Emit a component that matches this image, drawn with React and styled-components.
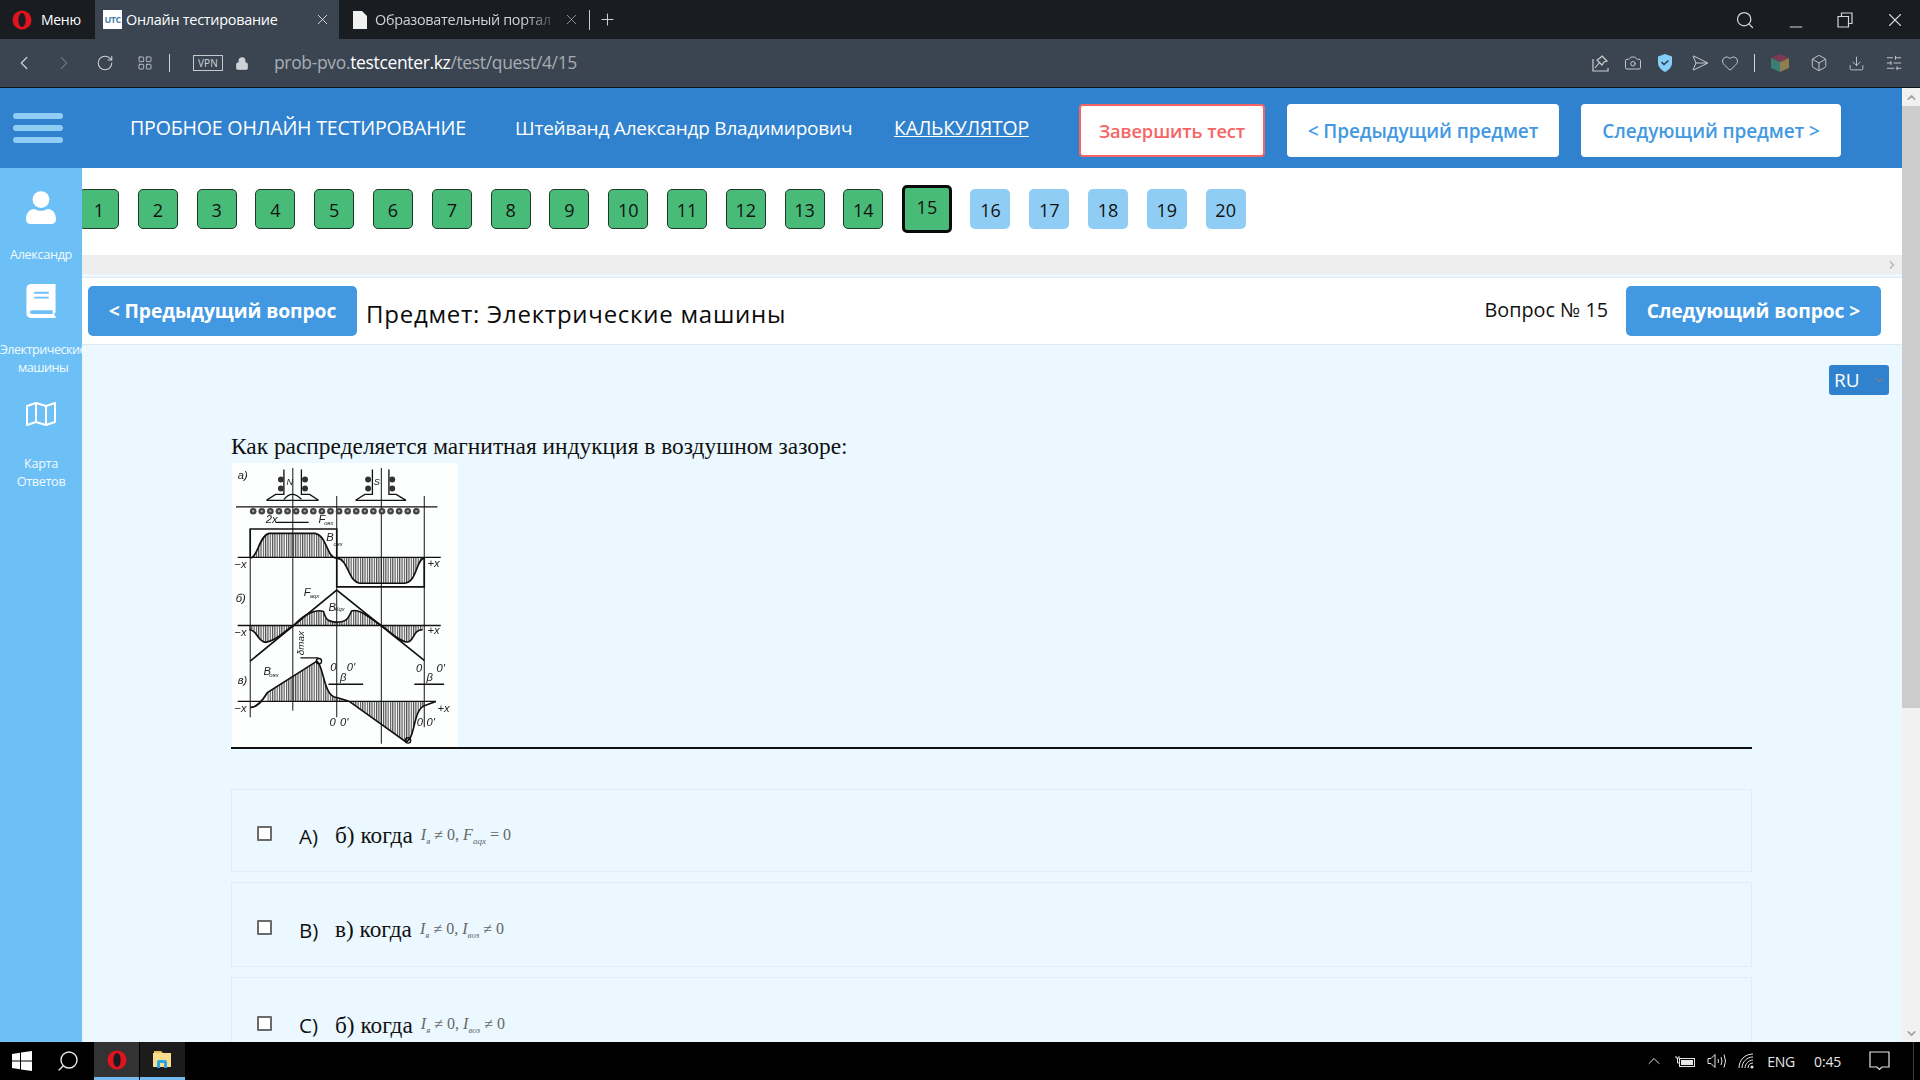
import React from 'react';
import styled, { createGlobalStyle } from 'styled-components';
import {
  X, Plus, Search, Minus, ChevronLeft, ChevronRight, RotateCw, LayoutGrid, Lock,
  Camera, Send, Heart, Box, Download, SlidersHorizontal, ChevronUp, ChevronDown,
} from 'lucide-react';

const ui = '"Open Sans", "Noto Sans", sans-serif';
const serif = '"Liberation Serif", serif';

const GlobalStyle = createGlobalStyle`
  html, body { margin: 0; padding: 0; height: 100%; overflow: hidden; }
  body { font-family: ${ui}; background: #000; }
  * { box-sizing: border-box; }
`;

const Screen = styled.div`
  width: 1920px;
  height: 1080px;
  display: flex;
  flex-direction: column;
  overflow: hidden;
`;

/* browser chrome */
const TabStrip = styled.div`
  height: 39px;
  flex: none;
  display: flex;
  align-items: center;
  background: #191c21;
  color: #fff;
`;
const MenuButton = styled.div`
  width: 95px;
  height: 100%;
  display: flex;
  align-items: center;
  gap: 9px;
  padding-left: 12px;
  font-size: 14px;
  letter-spacing: -.3px;
`;
const ActiveTab = styled.div`
  width: 244px;
  height: 100%;
  display: flex;
  align-items: center;
  padding-left: 8px;
  background: #3a4551;
  font-size: 14.4px;
  letter-spacing: -.25px;
`;
const Favicon = styled.div`
  width: 19px;
  height: 19px;
  margin-right: 4px;
  background: #fff;
  color: #4a7fa8;
  font-size: 9px;
  font-weight: 700;
  line-height: 19px;
  text-align: center;
  letter-spacing: -.5px;
`;
const TabTitle = styled.span`
  flex: 1;
  white-space: nowrap;
  color: #fff;
`;
const FadedTitle = styled.span`
  width: 176px;
  flex: none;
  white-space: nowrap;
  color: #cfd3d7;
  -webkit-mask-image: linear-gradient(to right, #000 85%, rgba(0, 0, 0, .25));
  mask-image: linear-gradient(to right, #000 85%, rgba(0, 0, 0, .25));
`;
const TabClose = styled.div`
  width: 34px;
  flex: none;
  display: flex;
  justify-content: center;
  color: ${({ $dim }) => ($dim ? '#9aa0a6' : '#e8e8e8')};
`;
const IdleTab = styled.div`
  width: 250px;
  height: 100%;
  display: flex;
  align-items: center;
  padding-left: 14px;
  font-size: 14.4px;
  letter-spacing: -.3px;
  gap: 8px;
`;
const IdleClose = styled(TabClose)`
  margin-left: -5px;
`;
const NewTab = styled.div`
  height: 20px;
  border-left: 1px solid #c8ccd0;
  padding-left: 8px;
  display: flex;
  align-items: center;
  color: #d8dadc;
`;
const WindowControls = styled.div`
  margin-left: auto;
  display: flex;
  align-items: center;
  gap: 31px;
  padding-right: 14px;
  color: #d3d5d8;
`;
const AddressBar = styled.div`
  height: 49px;
  flex: none;
  display: flex;
  align-items: center;
  background: #3a4551;
  border-bottom: 1px solid #10151a;
  color: #cfd3d7;
  padding-left: 13px;
`;
const NavSlot = styled.div`
  width: ${({ $w }) => $w}px;
  display: flex;
  color: ${({ $off }) => ($off ? '#68727d' : '#cfd3d7')};
`;
const LockSlot = styled(NavSlot)`
  margin-left: 12px;
`;
const ChromeDivider = styled.div`
  width: 1px;
  height: 18px;
  background: #cfd3d7;
`;
const VpnBadge = styled.div`
  margin-left: 23px;
  width: 30px;
  height: 16px;
  border: 1px solid #c5c9cd;
  font-size: 10px;
  line-height: 14px;
  text-align: center;
  letter-spacing: .2px;
`;
const UrlText = styled.div`
  margin: -2px 0 0 25px;
  font-size: 17.5px;
  letter-spacing: -.35px;
  color: #a7adb4;
  b { font-weight: 400; color: #fff; }
`;
const AddressTools = styled.div`
  margin-left: auto;
  display: flex;
  align-items: center;
  gap: 15px;
  padding-right: 17px;
`;
const ToolGap = styled.span`
  display: flex;
  margin-left: 5px;
`;

/* page */
const Viewport = styled.div`
  flex: 1;
  min-height: 0;
  display: flex;
`;
const Page = styled.div`
  flex: 1;
  min-width: 0;
  display: flex;
  flex-direction: column;
  background: #ebf8ff;
`;
const ScrollTrack = styled.div`
  width: 18px;
  flex: none;
  display: flex;
  flex-direction: column;
  background: #f1f1f1;
  color: #a3a3a3;
`;
const ScrollArrow = styled.div`
  height: 18px;
  display: flex;
  align-items: center;
  justify-content: center;
`;
const ScrollThumb = styled.div`
  height: 602px;
  background: #cdcdcd;
  margin-bottom: auto;
`;
const Header = styled.header`
  height: 80px;
  flex: none;
  display: flex;
  align-items: center;
  background: #3182ce;
  color: #fff;
  padding-left: 13px;
`;
const Burger = styled.div`
  width: 50px;
  display: flex;
  flex-direction: column;
  gap: 6px;
  margin: -1px 67px 0 0;
  i {
    height: 6px;
    border-radius: 3px;
    background: #90cdf4;
  }
`;
const HeaderText = styled.div`
  width: ${({ $w }) => $w}px;
  flex: none;
  margin-top: -1px;
  font-size: ${({ $size }) => $size}px;
  letter-spacing: -.2px;
  white-space: nowrap;
  text-decoration: ${({ $link }) => ($link ? 'underline' : 'none')};
`;
const HeaderButton = styled.button`
  width: ${({ $w }) => $w}px;
  height: 53px;
  flex: none;
  margin: 5px 22px 0 0;
  border-radius: 4px;
  background: #fff;
  border: 2px solid ${({ $danger }) => ($danger ? '#f56565' : '#fff')};
  color: ${({ $danger }) => ($danger ? '#f56565' : '#4299e1')};
  font-family: ${ui};
  font-size: ${({ $danger }) => ($danger ? 18.3 : 19)}px;
  font-weight: 600;
  letter-spacing: -.1px;
  white-space: nowrap;
  padding: 0;
`;
const Body = styled.div`
  flex: 1;
  min-height: 0;
  display: flex;
`;
const Sidebar = styled.aside`
  width: 82px;
  flex: none;
  background: #6cc0f6;
  color: #fff;
  position: relative;
  z-index: 1;
  display: flex;
  flex-direction: column;
  align-items: center;
  padding-top: 3px;
`;
const SideItem = styled.div`
  width: 82px;
  height: ${({ $h }) => $h}px;
  flex: none;
  display: flex;
  flex-direction: column;
  align-items: center;
`;
const SideIcon = styled.div`
  height: ${({ $h }) => $h}px;
  flex: none;
  display: flex;
  align-items: center;
  justify-content: center;
`;
const SideLabel = styled.div`
  font-size: 12.7px;
  line-height: 18px;
  letter-spacing: ${({ $tight }) => ($tight ? -0.55 : -0.35)}px;
  margin-left: ${({ $tight }) => ($tight ? 4 : 0)}px;
  text-align: center;
  white-space: nowrap;
  color: #f2faff;
`;
const Main = styled.main`
  flex: 1;
  min-width: 0;
  display: flex;
  flex-direction: column;
  overflow: hidden;
`;
const NumberRow = styled.div`
  height: 87px;
  flex: none;
  background: #fff;
  display: flex;
  align-items: center;
  gap: 18.8px;
  padding-bottom: 5px;
  overflow: hidden;
`;
const NumberButton = styled.div`
  width: ${({ $current }) => ($current ? 49.5 : 40)}px;
  height: ${({ $current }) => ($current ? 48 : 40)}px;
  flex: none;
  border-radius: 5px;
  font-size: 18px;
  display: flex;
  align-items: center;
  justify-content: center;
  color: #111;
  background: ${({ $done }) => ($done ? '#48bb78' : '#90cdf4')};
  border: ${({ $current, $done }) => ($current ? '3px solid #0a0a0a' : $done ? '1px solid #1d3a2a' : 'none')};
  &:first-child { margin-left: -3px; }
  span { position: relative; top: ${({ $current }) => ($current ? -2 : 1)}px; }
`;
const RowScroll = styled.div`
  height: 19px;
  flex: none;
  background: #eeeeee;
  color: #b5b5b5;
  display: flex;
  align-items: center;
  justify-content: flex-end;
  padding-right: 4px;
`;
const QuestionBar = styled.div`
  height: 68px;
  flex: none;
  margin-top: 3px;
  background: #fff;
  border-top: 1px solid #dcebf5;
  border-bottom: 1px solid #e2e8f0;
  display: flex;
  align-items: center;
  padding: 0 21px 0 6px;
`;
const SolidButton = styled.button`
  width: ${({ $w }) => $w}px;
  height: 50px;
  flex: none;
  border: none;
  padding: 0;
  border-radius: 5px;
  background: #4299e1;
  color: #fff;
  font-family: ${ui};
  font-size: 19.3px;
  font-weight: 700;
  letter-spacing: -.1px;
  white-space: nowrap;
  margin-top: -1px;
`;
const SubjectTitle = styled.h2`
  margin: 5px 0 0 9px;
  font-size: 24px;
  font-weight: 500;
  letter-spacing: .75px;
  color: #0b0b0b;
  white-space: nowrap;
`;
const QuestionNumber = styled.div`
  margin: -3px 18px 0 auto;
  font-size: 19.8px;
  color: #111;
`;
const Content = styled.div`
  flex: 1;
  position: relative;
  padding: 88px 150px 0 149px;
`;
const LangSelect = styled.div`
  position: absolute;
  top: 20px;
  right: 13px;
  width: 60px;
  height: 30px;
  border-radius: 3px;
  background: #3182ce;
  color: #fff;
  font-size: 19px;
  display: flex;
  align-items: center;
  padding-left: 5px;
  svg { position: absolute; right: 3px; color: #6b7f95; }
`;
const QuestionText = styled.div`
  font-family: ${serif};
  font-size: 23.4px;
  line-height: 26px;
  color: #111;
  height: 30px;
`;
const Figure = styled.svg`
  display: block;
  width: 228px;
  height: 284px;
  filter: blur(.35px);
`;
const Rule = styled.div`
  height: 2px;
  background: #111;
  margin: 0 0 40px;
`;
const OptionCard = styled.div`
  height: ${({ $h }) => $h}px;
  flex: none;
  margin-bottom: 10px;
  border: 1px solid #e2ecf4;
  display: flex;
  align-items: center;
  padding-left: 25px;
`;
const CheckBox = styled.div`
  width: 15px;
  height: 15px;
  flex: none;
  background: #fff;
  border: 2px solid #6b6b6b;
  border-radius: 1px;
  margin-top: 6px;
`;
const OptionLetter = styled.div`
  width: 36px;
  margin: 10px 0 0 27px;
  font-size: 20.5px;
  color: #111;
`;
const OptionText = styled.div`
  font-family: ${serif};
  font-size: 23.3px;
  color: #111;
  margin: 10px 8px 0 0;
`;
const Formula = styled.div`
  font-family: ${serif};
  font-size: 16px;
  color: #666;
  white-space: nowrap;
  margin-top: 11px;
  sub { font-size: 9px; font-style: italic; }
`;

/* taskbar */
const Taskbar = styled.footer`
  height: 38px;
  flex: none;
  background: #000;
  color: #e6e6e6;
  display: flex;
  align-items: center;
`;
const StartSlot = styled.div`
  width: ${({ $w }) => $w}px;
  height: 100%;
  display: flex;
  align-items: center;
  justify-content: center;
`;
const TaskTile = styled.div`
  width: 45px;
  height: 100%;
  margin-right: 1px;
  display: flex;
  align-items: center;
  justify-content: center;
  background: ${({ $bg }) => $bg};
  border-bottom: 3px solid #76b9ed;
`;
const Tray = styled.div`
  margin-left: auto;
  height: 100%;
  display: flex;
  align-items: center;
  gap: 11px;
  padding-right: 6px;
  font-size: 14px;
  letter-spacing: -.2px;
`;
const TrayText = styled.span`
  margin: 0 ${({ $m }) => $m || 0}px 0 ${({ $l }) => $l || 0}px;
`;
const TrayEdge = styled.div`
  width: 1px;
  height: 100%;
  margin-left: 12px;
  background: #3a3a3a;
`;

const OperaLogo = ({ size = 20 }) => (
  <svg width={size} height={size} viewBox="0 0 20 20">
    <ellipse cx="10" cy="10" rx="9.5" ry="9.5" fill="#e0131f" />
    <ellipse cx="10" cy="10" rx="3.7" ry="7" fill="#191c21" />
  </svg>
);

const PinIcon = () => (
  <svg width="17" height="18" viewBox="0 0 17 18" fill="none" stroke="#c9cdd1" strokeWidth="1.2">
    <path d="M1 5v12h15v-3" />
    <path d="M10 2l5 5-3 1-2 3-5-5 3-2zM7 9l-4 5" />
  </svg>
);
const ShieldIcon = () => (
  <svg width="16" height="18" viewBox="0 0 16 18">
    <path d="M8 0l7 2.5V9c0 4-3 7-7 9-4-2-7-5-7-9V2.500z" fill="#86cdfa" />
    <path d="M4.500 8l2.500 2.500 4.500-4" fill="none" stroke="#2c3947" strokeWidth="1.500" />
  </svg>
);
const ColorCube = () => (
  <svg width="20" height="20" viewBox="0 0 20 20">
    <path d="M10 1l9 4-9 4-9-4z" fill="#7b3a52" />
    <path d="M1 5l9 4v10l-9-4z" fill="#3b7f73" />
    <path d="M19 5l-9 4v10l9-4z" fill="#8f7d50" />
  </svg>
);
const UserIcon = () => (
  <svg width="30" height="34" viewBox="0 0 32 36" fill="#fff">
    <circle cx="16" cy="9" r="9" />
    <path d="M0 30c0-7 4-11 9-11 2 1 4 2 7 2s5-1 7-2c5 0 9 4 9 11 0 3-2 5-4 5H4c-2 0-4-2-4-5z" />
  </svg>
);
const BookIcon = () => (
  <svg width="30" height="34" viewBox="0 0 30 35">
    <path d="M5 0h25v29c-2 1-2 3 0 4v2H6c-4 0-6-2-6-5V5c0-3 2-5 5-5z" fill="#fff" />
    <path d="M8 9h15M8 14h15" stroke="#6cc0f6" strokeWidth="2" />
    <path d="M6 27h21v4H6c-3 0-3-4 0-4z" fill="#6cc0f6" />
  </svg>
);
const MapIcon = () => (
  <svg width="30" height="24" viewBox="0 0 30 24" fill="none" stroke="#fff" strokeWidth="2" strokeLinejoin="round">
    <path d="M1 4l9-3 10 3 9-3v19l-9 3-10-3-9 3z" />
    <path d="M10 1v19M20 4v19" />
  </svg>
);
const WinLogo = () => (
  <svg width="20" height="20" viewBox="0 0 20 20" fill="#fff">
    <path d="M0 3l8-1.200V9.500H0zM9 1.600L20 0v9.500H9zM0 10.500h8v7.700L0 17zM9 10.500h11V20L9 18.400z" />
  </svg>
);
const FolderIcon = () => (
  <svg width="20" height="19" viewBox="0 0 20 19">
    <path d="M1 1h7l2 2h-9z" fill="#e8c15a" />
    <rect x="0" y="3" width="18" height="14" fill="#f8dd8e" />
    <path d="M4 18v-6q0-2 2-2h6q2 0 2 2v6h-3v-5H7v5z" fill="#2fa5e0" />
  </svg>
);
const WifiIcon = () => (
  <svg width="16" height="16" viewBox="0 0 16 16" fill="none" stroke="#e6e6e6" strokeWidth="1">
    <path d="M1 15C1 7 7 1 15 1M4 15c0-6 5-11 11-11M7 15c0-4 4-8 8-8M10 15c0-3 2-5 5-5" />
    <circle cx="14" cy="14" r="1.500" fill="#e6e6e6" stroke="none" />
  </svg>
);
const BatteryIcon = () => (
  <svg width="21" height="13" viewBox="0 0 21 13" fill="none" stroke="#e6e6e6">
    <rect x="4.500" y="3.500" width="15" height="8" />
    <rect x="6" y="5" width="12" height="5" fill="#e6e6e6" stroke="none" />
    <path d="M1 1v2h3V1M2.500 3v5h2" />
  </svg>
);
const VolumeIcon = () => (
  <svg width="20" height="16" viewBox="0 0 20 16" fill="none" stroke="#e6e6e6">
    <path d="M1 5.500h3L8 1.500v13l-4-4H1zM11 6q1 2 0 4M14 4q2 4 0 8M17 1.500q3 6.500 0 13" />
  </svg>
);
const BubbleIcon = () => (
  <svg width="21" height="20" viewBox="0 0 21 20" fill="none" stroke="#e6e6e6" strokeWidth="1.200">
    <path d="M1 1h19v15h-7l-2.500 2.500L8 16H1z" />
  </svg>
);

// machine field sketch, coordinates follow the picture
const FieldDiagram = () => {
  const wires = [];
  for (let x = 97; x <= 600; x += 26) wires.push(x);
  const hatch = [
    'M88 318C110 318 115 250 145 243L285 243C320 250 320 318 350 318Z',
    'M350 318C385 320 385 392 420 394L555 394C595 390 590 320 615 318Z',
    'M85 522V535C110 535 110 572 135 573C170 570 200 530 220 522Z',
    'M220 522C250 490 285 470 310 480C318 510 330 510 350 512C380 512 385 500 395 478C420 470 450 500 485 522Z',
    'M485 522C510 540 540 572 565 572C585 570 580 535 610 535V522Z',
    'M140 752V725L290 630C310 640 310 740 350 740C370 745 380 750 388 752Z',
    'M388 752L560 875C590 860 580 780 615 765V752Z',
  ];
  const subs = [[312, 218, 'оях'], [340, 282, 'оях'], [268, 440, 'aqx'], [345, 478, 'бqx'], [146, 678, 'оях']];
  return (
    <Figure viewBox="33 30 684 860">
      <defs>
        <pattern id="hatch" width="7" height="8" patternUnits="userSpaceOnUse">
          <rect width="3.500" height="8" fill="#222" />
        </pattern>
      </defs>
      <rect x="33" y="30" width="684" height="860" fill="#fdfefe" />
      {hatch.map((d) => <path key={d} d={d} fill="url(#hatch)" opacity=".8" />)}
      <g fill="none" stroke="#111" strokeWidth="4">
        <path d="M217 45V780M350 130V800M485 45V880M88 230V800M615 130V830" strokeWidth="3" />
        <path d="M45 163H655M50 316H665M50 522H665M50 752H650" />
        <path d="M88 318V230H350V405H615V318" strokeWidth="5" />
        <path d="M88 630L350 415L615 628" strokeWidth="5" />
        <path d="M88 318C110 318 115 250 145 243L285 243C320 250 320 318 350 318C385 320 385 392 420 394L555 394C595 390 590 320 615 318" strokeWidth="5" />
        <path d="M85 535C110 535 110 572 135 573C170 570 200 530 220 522C250 490 285 470 310 480C318 510 330 510 350 512C380 512 385 500 395 478C420 470 450 500 485 522C510 540 540 572 565 572C585 570 580 535 610 535" strokeWidth="5" />
        <path d="M88 770C110 770 125 750 140 725L290 630C310 640 310 740 350 740C370 745 380 750 388 752L560 875C590 860 580 780 615 765L650 752" strokeWidth="5" />
        <path d="M137 143L165 125H190V50M295 143L268 125H243V50M137 143H295" />
        <path d="M407 143L435 125H458V50M560 143L530 125H508V50M407 143H560" />
        <path d="M190 140Q215 110 243 140M165 210H265M240 620H295M325 700H430M585 700H675" />
        <circle cx="296" cy="630" r="8" />
        <circle cx="566" cy="870" r="8" />
      </g>
      {[[181, 80], [181, 107], [254, 80], [254, 107], [445, 80], [445, 107], [518, 80], [518, 107]].map(([cx, cy]) => (
        <circle key={`${cx}-${cy}`} cx={cx} cy={cy} r="9" fill="#333" />
      ))}
      {wires.map((cx) => (
        <g key={cx}>
          <circle cx={cx} cy="176" r="10" fill="#444" />
          <circle cx={cx} cy="176" r="3.500" fill="#aaa" />
        </g>
      ))}
      <g fontFamily="Liberation Sans, sans-serif" fontStyle="italic" fontSize="34" fill="#222">
        <text x="50" y="80">а)</text>
        <text x="198" y="98" fontSize="28">N</text>
        <text x="462" y="98" fontSize="28">S</text>
        <text x="135" y="212">2x</text>
        <text x="295" y="212">F</text>
        <text x="318" y="265">B</text>
        <text x="40" y="348">−x</text>
        <text x="625" y="346">+x</text>
        <text x="44" y="450">б)</text>
        <text x="250" y="432">F</text>
        <text x="325" y="478">B</text>
        <text x="40" y="555">−x</text>
        <text x="625" y="548">+x</text>
        <text x="50" y="700">в)</text>
        <text x="128" y="672">B</text>
        <text x="330" y="660">0</text>
        <text x="380" y="660">0'</text>
        <text x="590" y="662">0</text>
        <text x="652" y="662">0'</text>
        <text x="360" y="690">β</text>
        <text x="622" y="690">β</text>
        <text x="40" y="785">−x</text>
        <text x="655" y="785">+x</text>
        <text x="328" y="825">0</text>
        <text x="360" y="825">0'</text>
        <text x="592" y="825">0</text>
        <text x="622" y="825">0'</text>
        <text transform="translate(250 612) rotate(-90)" fontSize="30">δmax</text>
        {subs.map(([x, y, s]) => <text key={`${x}-${y}`} x={x} y={y} fontSize="18">{s}</text>)}
      </g>
    </Figure>
  );
};

const options = [
  { letter: 'A)', text: 'б) когда', h: 83, formula: <><i>I</i><sub>я</sub> ≠ 0, <i>F</i><sub>aqx</sub> = 0</> },
  { letter: 'B)', text: 'в) когда', h: 85, formula: <><i>I</i><sub>я</sub> ≠ 0, <i>I</i><sub>воз</sub> ≠ 0</> },
  { letter: 'C)', text: 'б) когда', h: 86, formula: <><i>I</i><sub>я</sub> ≠ 0, <i>I</i><sub>воз</sub> ≠ 0</> },
];

const numbers = Array.from({ length: 20 }, (_, i) => i + 1);

export default function App() {
  return (
    <Screen>
      <GlobalStyle />
      <TabStrip>
        <MenuButton><OperaLogo />Меню</MenuButton>
        <ActiveTab>
          <Favicon>UTC</Favicon>
          <TabTitle>Онлайн тестирование</TabTitle>
          <TabClose><X size={17} strokeWidth={1.2} /></TabClose>
        </ActiveTab>
        <IdleTab>
          <svg width="14" height="18" viewBox="0 0 14 18"><path d="M0 0h9l5 5v13H0z" fill="#f0f0f0" /></svg>
          <FadedTitle>Образовательный портал</FadedTitle>
          <IdleClose $dim><X size={17} strokeWidth={1.2} /></IdleClose>
        </IdleTab>
        <NewTab><Plus size={19} strokeWidth={1.2} /></NewTab>
        <WindowControls>
          <Search size={20} strokeWidth={1.5} />
          <Minus size={20} strokeWidth={1.2} style={{ transform: 'translateY(7px)' }} />
          <svg width="16" height="16" viewBox="0 0 16 16" fill="none" stroke="currentColor" strokeWidth="1.200"><path d="M1 4.500h10.500V15H1zM4.500 4.500V1H15v10.500h-3.500" /></svg>
          <X size={22} strokeWidth={1.2} />
        </WindowControls>
      </TabStrip>
      <AddressBar>
        <NavSlot $w={40}><ChevronLeft size={22} strokeWidth={1.3} /></NavSlot>
        <NavSlot $w={43} $off><ChevronRight size={22} strokeWidth={1.3} /></NavSlot>
        <NavSlot $w={41}><RotateCw size={18} strokeWidth={1.4} /></NavSlot>
        <NavSlot $w={32}><LayoutGrid size={16} strokeWidth={1.2} /></NavSlot>
        <ChromeDivider />
        <VpnBadge>VPN</VpnBadge>
        <LockSlot $w={14}><Lock size={15} fill="#cfd3d7" strokeWidth={1.8} /></LockSlot>
        <UrlText>prob-pvo.<b>testcenter.kz</b>/test/quest/4/15</UrlText>
        <AddressTools>
          <PinIcon />
          <Camera size={18} strokeWidth={1.2} />
          <ShieldIcon />
          <Send size={18} strokeWidth={1.2} style={{ transform: 'rotate(45deg)' }} />
          <Heart size={18} strokeWidth={1.2} />
          <ChromeDivider />
          <ColorCube />
          <ToolGap><Box size={18} strokeWidth={1.2} /></ToolGap>
          <ToolGap><Download size={17} strokeWidth={1.2} /></ToolGap>
          <ToolGap><SlidersHorizontal size={18} strokeWidth={1.2} /></ToolGap>
        </AddressTools>
      </AddressBar>
      <Viewport>
        <Page>
          <Header>
            <Burger><i /><i /><i /></Burger>
            <HeaderText $w={385} $size={19.6}>ПРОБНОЕ ОНЛАЙН ТЕСТИРОВАНИЕ</HeaderText>
            <HeaderText $w={379} $size={19}>Штейванд Александр Владимирович</HeaderText>
            <HeaderText $w={185} $size={19.4} $link>КАЛЬКУЛЯТОР</HeaderText>
            <HeaderButton $w={186} $danger>Завершить тест</HeaderButton>
            <HeaderButton $w={272}>&lt; Предыдущий предмет</HeaderButton>
            <HeaderButton $w={260}>Следующий предмет &gt;</HeaderButton>
          </Header>
          <Body>
            <Sidebar>
              <SideItem $h={91}>
                <SideIcon $h={74}><UserIcon /></SideIcon>
                <SideLabel>Александр</SideLabel>
              </SideItem>
              <SideItem $h={112}>
                <SideIcon $h={78}><BookIcon /></SideIcon>
                <SideLabel $tight>Электрические<br />машины</SideLabel>
              </SideItem>
              <SideItem $h={120}>
                <SideIcon $h={80}><MapIcon /></SideIcon>
                <SideLabel>Карта<br />Ответов</SideLabel>
              </SideItem>
            </Sidebar>
            <Main>
              <NumberRow>
                {numbers.map((n) => (
                  <NumberButton key={n} $done={n <= 15} $current={n === 15}><span>{n}</span></NumberButton>
                ))}
              </NumberRow>
              <RowScroll><ChevronRight size={12} strokeWidth={3} /></RowScroll>
              <QuestionBar>
                <SolidButton $w={269}>&lt; Предыдущий вопрос</SolidButton>
                <SubjectTitle>Предмет: Электрические машины</SubjectTitle>
                <QuestionNumber>Вопрос № 15</QuestionNumber>
                <SolidButton $w={255}>Следующий вопрос &gt;</SolidButton>
              </QuestionBar>
              <Content>
                <LangSelect>RU<ChevronDown size={14} strokeWidth={2.5} /></LangSelect>
                <QuestionText>Как распределяется магнитная индукция в воздушном зазоре:</QuestionText>
                <FieldDiagram />
                <Rule />
                {options.map((o) => (
                  <OptionCard key={o.letter} $h={o.h}>
                    <CheckBox />
                    <OptionLetter>{o.letter}</OptionLetter>
                    <OptionText>{o.text}</OptionText>
                    <Formula>{o.formula}</Formula>
                  </OptionCard>
                ))}
              </Content>
            </Main>
          </Body>
        </Page>
        <ScrollTrack>
          <ScrollArrow><ChevronUp size={13} strokeWidth={3} /></ScrollArrow>
          <ScrollThumb />
          <ScrollArrow><ChevronDown size={13} strokeWidth={3} /></ScrollArrow>
        </ScrollTrack>
      </Viewport>
      <Taskbar>
        <StartSlot $w={43}><WinLogo /></StartSlot>
        <StartSlot $w={51}><Search size={24} strokeWidth={1.4} style={{ transform: 'scaleX(-1) translateX(1px)' }} /></StartSlot>
        <TaskTile $bg="#333333"><OperaLogo /></TaskTile>
        <TaskTile $bg="#1c1c1c"><FolderIcon /></TaskTile>
        <Tray>
          <ChevronUp size={20} strokeWidth={1.2} />
          <BatteryIcon />
          <VolumeIcon />
          <WifiIcon />
          <TrayText $l={2} $m={4}>ENG</TrayText>
          <TrayText $l={4} $m={17}>0:45</TrayText>
          <BubbleIcon />
          <TrayEdge />
        </Tray>
      </Taskbar>
    </Screen>
  );
}
